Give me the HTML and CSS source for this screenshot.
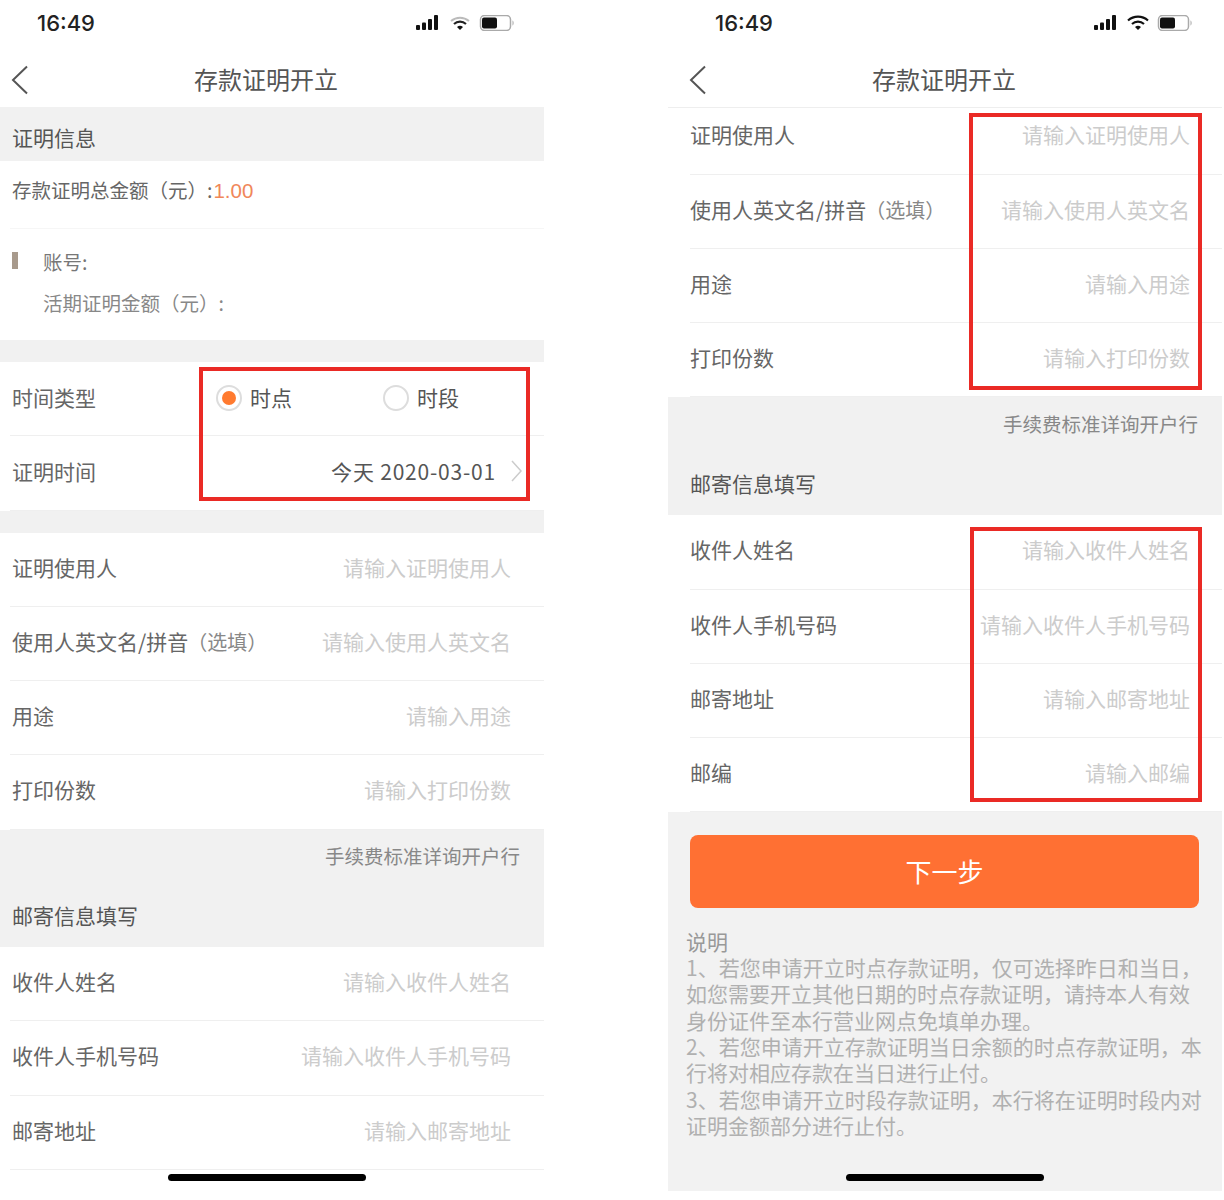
FILE: index.html
```html
<!DOCTYPE html>
<html>
	<head>
		<meta charset="UTF-8">
		<title>存款证明开立</title>
		<link rel="stylesheet" href="styles.css">
	</head>
	<body>
		<div class="screens">
			<!-- 左边一屏 -->
			<div class="phone phone_left">
				<div class="status">
					<span class="status_time">16:49</span>
					<svg class="status_icons" width="98" height="16" viewBox="0 0 98 16">
						<rect x="0" y="10" width="4" height="5" rx="1" fill="#111"/>
						<rect x="6" y="7.500" width="4" height="7.500" rx="1" fill="#111"/>
						<rect x="12" y="4" width="4" height="11" rx="1" fill="#111"/>
						<rect x="18" y="0" width="4" height="15" rx="1" fill="#111"/>
						<path d="M35 6a14 14 0 0 1 18 0" fill="none" stroke="#bbb" stroke-width="2"/>
						<path d="M38 9a9 9 0 0 1 12 0" fill="none" stroke="#222" stroke-width="2.200"/>
						<path d="M41 12a4.500 4.500 0 0 1 6 0l-3 3z" fill="#111"/>
						<rect x="64.500" y="0.500" width="30" height="15" rx="4" fill="#fff" stroke="#aaa" stroke-width="1.500"/>
						<rect x="66" y="2.500" width="15" height="11" rx="2" fill="#111"/>
						<path d="M96.500 5.500v5c1.500-.5 1.500-4.500 0-5z" fill="#aaa"/>
					</svg>
				</div>
				<div class="nav">
					<svg class="nav_back" width="18" height="30" viewBox="0 0 18 30"><path d="M16 1.500 2 15l14 13.500" fill="none" stroke="#555" stroke-width="2"/></svg>
					<div class="nav_title">存款证明开立</div>
				</div>
				<div class="section_head">证明信息</div>
				<div class="total"><span>存款证明总金额（元）:</span><span class="total_num">1.00</span></div>
				<div class="account">
					<div class="account_line"><i class="account_bar"></i><span>账号:</span></div>
					<div class="account_sub">活期证明金额（元）:</div>
				</div>
				<div class="gap"></div>
				<div class="row row_time">
					<span>时间类型</span>
					<div class="radios">
						<span class="radio radio_on"><i></i>时点</span>
						<span class="radio"><i></i>时段</span>
					</div>
				</div>
				<div class="row row_time row_date">
					<span>证明时间</span>
					<span class="date">今天 2020-03-01<svg width="11" height="22" viewBox="0 0 11 22"><path d="M1 1l9 10-9 10" fill="none" stroke="#ccc" stroke-width="1.500"/></svg></span>
				</div>
				<div class="gap"></div>
				<div class="row"><span>证明使用人</span><span class="hint">请输入证明使用人</span></div>
				<div class="row"><span>使用人英文名/拼音<em>（选填）</em></span><span class="hint">请输入使用人英文名</span></div>
				<div class="row"><span>用途</span><span class="hint">请输入用途</span></div>
				<div class="row"><span>打印份数</span><span class="hint">请输入打印份数</span></div>
				<div class="fee">
					<div class="fee_text">手续费标准详询开户行</div>
					<div class="fee_title">邮寄信息填写</div>
				</div>
				<div class="row"><span>收件人姓名</span><span class="hint">请输入收件人姓名</span></div>
				<div class="row"><span>收件人手机号码</span><span class="hint">请输入收件人手机号码</span></div>
				<div class="row"><span>邮寄地址</span><span class="hint">请输入邮寄地址</span></div>
				<div class="red_box red_time"></div>
				<div class="home_bar"></div>
			</div>
			<!-- 右边一屏 -->
			<div class="phone phone_right">
				<div class="status">
					<span class="status_time">16:49</span>
					<svg class="status_icons" width="98" height="16" viewBox="0 0 98 16">
						<rect x="0" y="10" width="4" height="5" rx="1" fill="#111"/>
						<rect x="6" y="7.500" width="4" height="7.500" rx="1" fill="#111"/>
						<rect x="12" y="4" width="4" height="11" rx="1" fill="#111"/>
						<rect x="18" y="0" width="4" height="15" rx="1" fill="#111"/>
						<path d="M34 5.500a15 15 0 0 1 20 0" fill="none" stroke="#111" stroke-width="2.200"/>
						<path d="M38 9a9 9 0 0 1 12 0" fill="none" stroke="#111" stroke-width="2.200"/>
						<path d="M41 12a4.500 4.500 0 0 1 6 0l-3 3z" fill="#111"/>
						<rect x="64.500" y="0.500" width="30" height="15" rx="4" fill="#fff" stroke="#aaa" stroke-width="1.500"/>
						<rect x="66" y="2.500" width="15" height="11" rx="2" fill="#111"/>
						<path d="M96.500 5.500v5c1.500-.5 1.500-4.500 0-5z" fill="#aaa"/>
					</svg>
				</div>
				<div class="nav">
					<svg class="nav_back" width="18" height="30" viewBox="0 0 18 30"><path d="M16 1.500 2 15l14 13.500" fill="none" stroke="#555" stroke-width="2"/></svg>
					<div class="nav_title">存款证明开立</div>
				</div>
				<div class="row row_first"><span>证明使用人</span><span class="hint">请输入证明使用人</span></div>
				<div class="row"><span>使用人英文名/拼音<em>（选填）</em></span><span class="hint">请输入使用人英文名</span></div>
				<div class="row"><span>用途</span><span class="hint">请输入用途</span></div>
				<div class="row"><span>打印份数</span><span class="hint">请输入打印份数</span></div>
				<div class="fee">
					<div class="fee_text">手续费标准详询开户行</div>
					<div class="fee_title">邮寄信息填写</div>
				</div>
				<div class="row"><span>收件人姓名</span><span class="hint">请输入收件人姓名</span></div>
				<div class="row"><span>收件人手机号码</span><span class="hint">请输入收件人手机号码</span></div>
				<div class="row"><span>邮寄地址</span><span class="hint">请输入邮寄地址</span></div>
				<div class="row"><span>邮编</span><span class="hint">请输入邮编</span></div>
				<div class="foot">
					<div class="next_btn">下一步</div>
					<div class="notes">
						<p>说明</p>
						<p>1、若您申请开立时点存款证明，仅可选择昨日和当日，</p>
						<p>如您需要开立其他日期的时点存款证明，请持本人有效</p>
						<p>身份证件至本行营业网点免填单办理。</p>
						<p>2、若您申请开立存款证明当日余额的时点存款证明，本</p>
						<p>行将对相应存款在当日进行止付。</p>
						<p>3、若您申请开立时段存款证明，本行将在证明时段内对</p>
						<p>证明金额部分进行止付。</p>
					</div>
				</div>
				<div class="red_box red_top"></div>
				<div class="red_box red_bottom"></div>
				<div class="home_bar"></div>
			</div>
		</div>
	</body>
</html>
```
FILE: styles.css
```css
*{
	margin: 0;
	padding: 0;
	box-sizing: border-box;
}
body{
	background-color: #fff;
	color: #666;
	font-family: "Noto Sans CJK SC", "Liberation Sans", sans-serif;
	font-size: 21px;
}
.screens{
	display: flex;
	gap: 124px;
	height: 1200px;
	overflow: hidden;
}
.phone{
	position: relative;
	width: 544px;
	height: 1200px;
}
.phone_right{
	width: 554px;
}
.status{
	height: 52px;
	display: flex;
	justify-content: space-between;
	align-items: center;
	padding: 0 30px 6px 37px;
	color: #222;
}
.phone_right .status{
	padding: 0 30px 6px 47px;
}
.status_time{
	font-family: Inter, sans-serif;
	font-size: 22px;
	font-weight: 500;
}
.nav{
	height: 55px;
	display: flex;
	align-items: center;
	padding-left: 11px;
}
.phone_right .nav{
	padding-left: 21px;
	height: 56px;
	border-bottom: 1px solid #eee;
}
.nav_title{
	flex: 1;
	text-align: center;
	padding: 0 41px 2px 0;
	font-size: 24px;
	line-height: 30px;
	color: #555;
}
.section_head{
	height: 54px;
	padding-left: 12px;
	background-color: #f1f1f1;
	color: #555;
	line-height: 60px;
}
.total{
	height: 68px;
	margin-left: 10px;
	padding: 12px 0 0 2px;
	border-bottom: 1px solid #f6f6f6;
	font-size: 19.500px;
	line-height: 34px;
	color: #666;
}
.total_num{
	margin-left: 1px;
	font-family: "Liberation Sans", sans-serif;
	font-size: 20.500px;
	color: #f0875a;
}
.account{
	height: 111px;
	padding: 15px 0 0 12px;
	font-size: 19.500px;
	color: #777;
}
.account_line{
	display: flex;
	align-items: center;
	height: 34px;
}
.account_bar{
	width: 6px;
	height: 17px;
	margin: 0 25px 2px 0;
	background-color: #a89a8c;
}
.account_sub{
	margin: 8px 0 0 31px;
	line-height: 34px;
	color: #888;
}
.gap{
	height: 22px;
	background-color: #f1f1f1;
}
.row{
	height: 74.250px;
	margin-left: 10px;
	padding: 0 33px 5px 2px;
	display: flex;
	justify-content: space-between;
	align-items: center;
	border-bottom: 1px solid #efefef;
	white-space: nowrap;
}
.phone_right .row{
	margin-left: 22px;
	padding: 0 32px 5px 0;
}
.phone_right .row_first{
	height: 66.500px;
	padding-bottom: 13px;
}
.row_time{
	padding-bottom: 3px;
}
.row em{
	font-style: normal;
	font-size: 20px;
	color: #888;
	margin-left: -1px;
}
.hint{
	color: #ccc;
}
.radios{
	display: flex;
	width: 292px;
	margin-right: 3px;
	color: #555;
}
.radio{
	flex: none;
	display: flex;
	align-items: center;
	width: 167px;
}
.radio i{
	width: 26px;
	height: 26px;
	margin: 1px 8px 0 0;
	border: 2px solid #ddd;
	border-radius: 50%;
}
.radio_on i{
	background-color: #ff7a2f;
	background-clip: content-box;
	padding: 4px;
}
.row_date{
	padding-right: 22px;
}
.date{
	display: flex;
	align-items: center;
	gap: 15px;
	color: #555;
	letter-spacing: .8px;
}
.fee{
	height: 118px;
	background-color: #f1f1f1;
	padding: 9px 24px 0 22px;
}
.phone_left .fee{
	height: 117.500px;
	padding: 8px 24px 0 12px;
}
.fee_text{
	text-align: right;
	font-size: 19.500px;
	line-height: 36px;
	color: #888;
}
.fee_title{
	margin-top: 23px;
	line-height: 36px;
	font-size: 21px;
	color: #555;
}
.foot{
	height: 379px;
	background-color: #f2f2f2;
	padding: 23px 23px 0 18px;
}
.next_btn{
	height: 73px;
	margin-left: 4px;
	background-color: #ff7033;
	border-radius: 8px;
	color: #fff;
	font-size: 26px;
	line-height: 71px;
	text-align: center;
}
.notes{
	margin-top: 19.500px;
	font-size: 21px;
	line-height: 26.300px;
	color: #b0b0b0;
	white-space: nowrap;
}
.notes p:first-child{
	color: #999;
}
.red_box{
	position: absolute;
	border: 4px solid #ea2a25;
}
.red_time{
	left: 199px;
	top: 367px;
	width: 331px;
	height: 134px;
}
.red_top{
	left: 301px;
	top: 113px;
	width: 233px;
	height: 277px;
}
.red_bottom{
	left: 302px;
	top: 527px;
	width: 232px;
	height: 275px;
}
.home_bar{
	position: absolute;
	left: 168px;
	top: 1174px;
	width: 198px;
	height: 7px;
	border-radius: 4px;
	background-color: #000;
}
.phone_right .home_bar{
	left: 178px;
}
```
